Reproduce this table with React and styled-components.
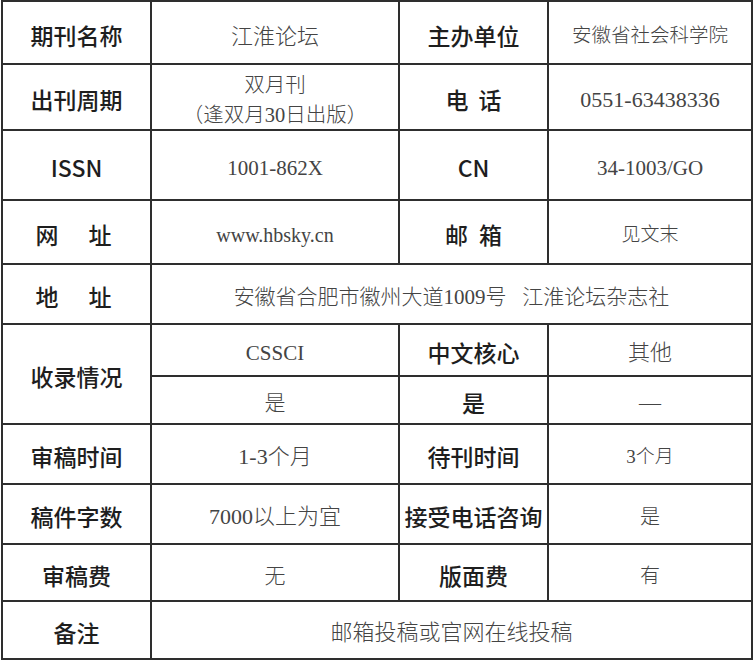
import React from 'react';
import styled, { createGlobalStyle } from 'styled-components';

const GlobalStyle = createGlobalStyle`
  html, body {
    margin: 0;
    padding: 0;
    background: #ffffff;
  }
`;

const Grid = styled.div`
  display: grid;
  width: 752px;
  margin-left: 1px;
  box-sizing: border-box;
  grid-template-columns: 147px 246px 147px 202px;
  grid-template-rows: 61px 64px 68px 62px 58px 50px 46px 58px 58px 55px 56px;
  gap: 2px;
  padding: 2px;
  background: #2e2e2e;
`;

const Cell = styled.div`
  background: #ffffff;
  display: flex;
  flex-direction: column;
  align-items: center;
  justify-content: center;
  text-align: center;
  box-sizing: border-box;
  grid-column: ${p => p.$span ? `span ${p.$span}` : 'auto'};
  grid-row: ${p => p.$rows ? `span ${p.$rows}` : 'auto'};
`;

const Label = styled(Cell)`
  font-family: "Noto Sans CJK SC", "Noto Sans", sans-serif;
  font-weight: 500;
  font-size: 23px;
  color: #1e1e1e;
  padding-top: 4px;
  letter-spacing: ${p => p.$spread || 0}px;
  text-indent: ${p => p.$indent ?? p.$spread ?? 0}px;
`;

const Value = styled(Cell)`
  font-family: "Liberation Serif", "Noto Sans CJK SC", serif;
  font-weight: 300;
  font-size: ${p => p.$size || 21}px;
  color: #444444;
  padding-top: ${p => p.$top ?? 6}px;
  line-height: 30px;
`;

const Line = styled.span`
  display: block;
`;

const App = () => {
  return (
    <>
      <GlobalStyle />
      <Grid>
        <Label>期刊名称</Label>
        <Value $size={22} $top={9}>江淮论坛</Value>
        <Label>主办单位</Label>
        <Value $size={19.5}>安徽省社会科学院</Value>

        <Label>出刊周期</Label>
        <Value $size={20.5}>
          <Line>双月刊</Line>
          <Line>（逢双月30日出版）</Line>
        </Value>
        <Label $spread={10}>电话</Label>
        <Value $size={22}>0551-63438336</Value>

        <Label>ISSN</Label>
        <Value>1001-862X</Value>
        <Label>CN</Label>
        <Value>34-1003/GO</Value>

        <Label $spread={30} $indent={24}>网址</Label>
        <Value $size={20}>www.hbsky.cn</Value>
        <Label $spread={11}>邮箱</Label>
        <Value $size={19}>见文末</Value>

        <Label $spread={30} $indent={24}>地址</Label>
        <Value $span={3}>安徽省合肥市徽州大道1009号&nbsp;&nbsp;&nbsp;江淮论坛杂志社</Value>

        <Label $rows={2}>收录情况</Label>
        <Value>CSSCI</Value>
        <Label>中文核心</Label>
        <Value $size={22}>其他</Value>
        <Value>是</Value>
        <Label>是</Label>
        <Value $size={22}>—</Value>

        <Label>审稿时间</Label>
        <Value $size={22}>1-3个月</Value>
        <Label>待刊时间</Label>
        <Value $size={19}>3个月</Value>

        <Label>稿件字数</Label>
        <Value $size={22}>7000以上为宜</Value>
        <Label>接受电话咨询</Label>
        <Value $size={20}>是</Value>

        <Label>审稿费</Label>
        <Value>无</Value>
        <Label>版面费</Label>
        <Value $size={20}>有</Value>

        <Label>备注</Label>
        <Value $span={3} $size={22}>邮箱投稿或官网在线投稿</Value>
      </Grid>
    </>
  );
};

export default App;
